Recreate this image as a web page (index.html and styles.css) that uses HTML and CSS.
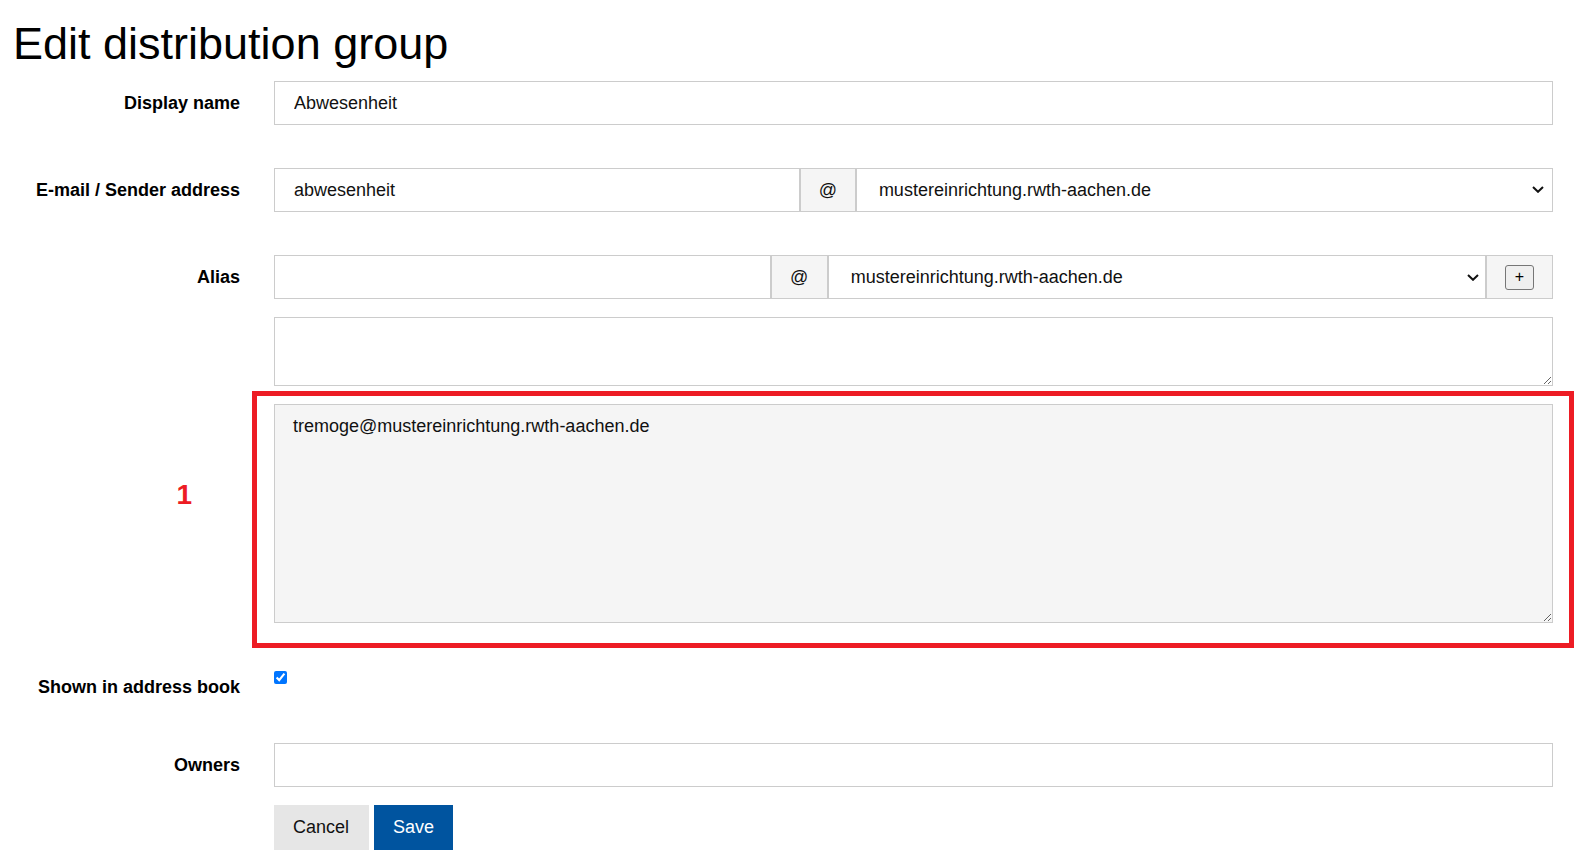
FILE: index.html
```html
<!DOCTYPE html>
<html lang="en">
<head>
<meta charset="utf-8">
<title>Edit distribution group</title>
<link rel="stylesheet" href="styles.css">
</head>
<body>
<main class="page">
  <h1 class="title">Edit distribution group</h1>
  <form class="form">
    <div class="row row-display">
      <label class="label">Display name</label>
      <div class="control">
        <input class="input" type="text" value="Abwesenheit">
      </div>
    </div>

    <div class="row row-email">
      <label class="label">E-mail / Sender address</label>
      <div class="control group group-email">
        <input class="input" type="text" value="abwesenheit">
        <span class="addon">@</span>
        <div class="select-wrap">
          <select class="select"><option>mustereinrichtung.rwth-aachen.de</option></select>
          <svg class="chev" width="12" height="7" viewBox="0 0 12 7"><path d="M1 1 L6 5.8 L11 1" fill="none" stroke="#111" stroke-width="2"/></svg>
        </div>
      </div>
    </div>

    <div class="row row-alias">
      <label class="label">Alias</label>
      <div class="control group group-alias">
        <input class="input" type="text" value="">
        <span class="addon">@</span>
        <div class="select-wrap">
          <select class="select"><option>mustereinrichtung.rwth-aachen.de</option></select>
          <svg class="chev chev-alias" width="12" height="7" viewBox="0 0 12 7"><path d="M1 1 L6 5.8 L11 1" fill="none" stroke="#111" stroke-width="2"/></svg>
        </div>
        <span class="addon"><button type="button" class="plus-btn">+</button></span>
      </div>
    </div>

    <div class="row row-aliaslist">
      <span class="label"></span>
      <div class="control">
        <textarea class="textarea textarea-small"></textarea>
      </div>
    </div>

    <div class="row row-marked">
      <span class="label marker">1</span>
      <div class="control">
        <div class="highlight">
          <textarea class="textarea textarea-readonly" readonly>tremoge@mustereinrichtung.rwth-aachen.de</textarea>
        </div>
      </div>
    </div>

    <div class="row row-check">
      <label class="label">Shown in address book</label>
      <div class="control">
        <input class="checkbox" type="checkbox" checked>
      </div>
    </div>

    <div class="row row-owners">
      <label class="label">Owners</label>
      <div class="control">
        <input class="input" type="text" value="">
      </div>
    </div>

    <div class="row row-actions">
      <span class="label"></span>
      <div class="control actions">
        <button type="button" class="btn btn-cancel">Cancel</button>
        <button type="button" class="btn btn-save">Save</button>
      </div>
    </div>
  </form>
</main>
</body>
</html>
```

FILE: styles.css
```css
* { box-sizing: border-box; }

html, body {
  margin: 0;
  padding: 0;
  background: #fff;
}

body {
  font-family: "Liberation Sans", Arial, sans-serif;
  color: #111;
}

.page {
  padding: 17px 30px 0 10px;
}

.title {
  margin: 0 0 10px 0;
  padding-left: 3px;
  font-size: 45px;
  font-weight: 400;
  line-height: 54px;
  color: #000;
}

.row {
  display: flex;
  align-items: flex-start;
}

.label {
  flex: 0 0 230px;
  margin-right: 34px;
  text-align: right;
  font-weight: 700;
  font-size: 18px;
  line-height: 44px;
  color: #000;
}

.control {
  flex: 1 1 auto;
  min-width: 0;
}

.row-display { margin-bottom: 43px; }
.row-email { margin-bottom: 43px; }
.row-alias { margin-bottom: 18px; }
.row-aliaslist { margin-bottom: 5px; }
.row-marked { margin-bottom: 17px; }
.row-check { margin-bottom: 34px; }
.row-owners { margin-bottom: 18px; }

.input {
  display: block;
  width: 100%;
  min-width: 0;
  height: 44px;
  border: 1px solid #ccc;
  border-radius: 0;
  padding: 0 19px;
  font-family: "Liberation Sans", Arial, sans-serif;
  font-size: 18px;
  color: #111;
  background: #fff;
  outline: none;
}

.group {
  display: grid;
  height: 44px;
}

.group-email {
  grid-template-columns: minmax(0, 43fr) 56px minmax(0, 57fr);
}

.group-alias {
  grid-template-columns: minmax(0, 43fr) 57px minmax(0, 57fr) 67px;
}

.addon {
  display: flex;
  align-items: center;
  justify-content: center;
  border: 1px solid #ccc;
  background: #f5f5f5;
  font-size: 18px;
  color: #111;
}

.select-wrap {
  position: relative;
  min-width: 0;
}

.select {
  display: block;
  width: 100%;
  height: 44px;
  -webkit-appearance: none;
  appearance: none;
  border: 1px solid #ccc;
  border-radius: 0;
  background: #fff;
  padding: 0 30px 0 22px;
  font-family: "Liberation Sans", Arial, sans-serif;
  font-size: 18px;
  color: #111;
  outline: none;
}

.chev {
  position: absolute;
  right: 9px;
  top: 18px;
  pointer-events: none;
}

.chev-alias {
  right: 7px;
  top: 19px;
}

.plus-btn {
  width: 29px;
  height: 25px;
  padding: 0;
  border: 1px solid #767676;
  border-radius: 3px;
  background: #efefef;
  font-family: "Liberation Sans", Arial, sans-serif;
  font-size: 16px;
  line-height: 22px;
  color: #000;
}

.textarea {
  display: block;
  width: 100%;
  border: 1px solid #ccc;
  border-radius: 0;
  padding: 8px 18px;
  font-family: "Liberation Sans", Arial, sans-serif;
  font-size: 18px;
  line-height: 27px;
  color: #111;
  background: #fff;
  outline: none;
  resize: vertical;
}

.textarea-small { height: 69px; }

.textarea-readonly {
  height: 219px;
  background: #f5f5f5;
}

.highlight {
  margin: 0 -21px 0 -22px;
  border: 5px solid #ed1c24;
  padding: 8px 16px 20px 17px;
}

.marker {
  color: #ed1c24;
  font-size: 28px;
  line-height: 32px;
  padding-top: 88px;
  padding-right: 48px;
}

.checkbox {
  display: block;
  width: 13px;
  height: 13px;
  margin: 6px 0 0 0;
  accent-color: #0075ff;
}

.actions {
  display: flex;
  gap: 5px;
}

.btn {
  height: 45px;
  padding: 0 19px;
  border: none;
  border-radius: 0;
  font-family: "Liberation Sans", Arial, sans-serif;
  font-size: 18px;
}

.btn-cancel {
  background: #e6e6e6;
  color: #111;
  padding: 0 20px 0 19px;
}

.btn-save {
  background: #00549f;
  color: #fff;
}
```
